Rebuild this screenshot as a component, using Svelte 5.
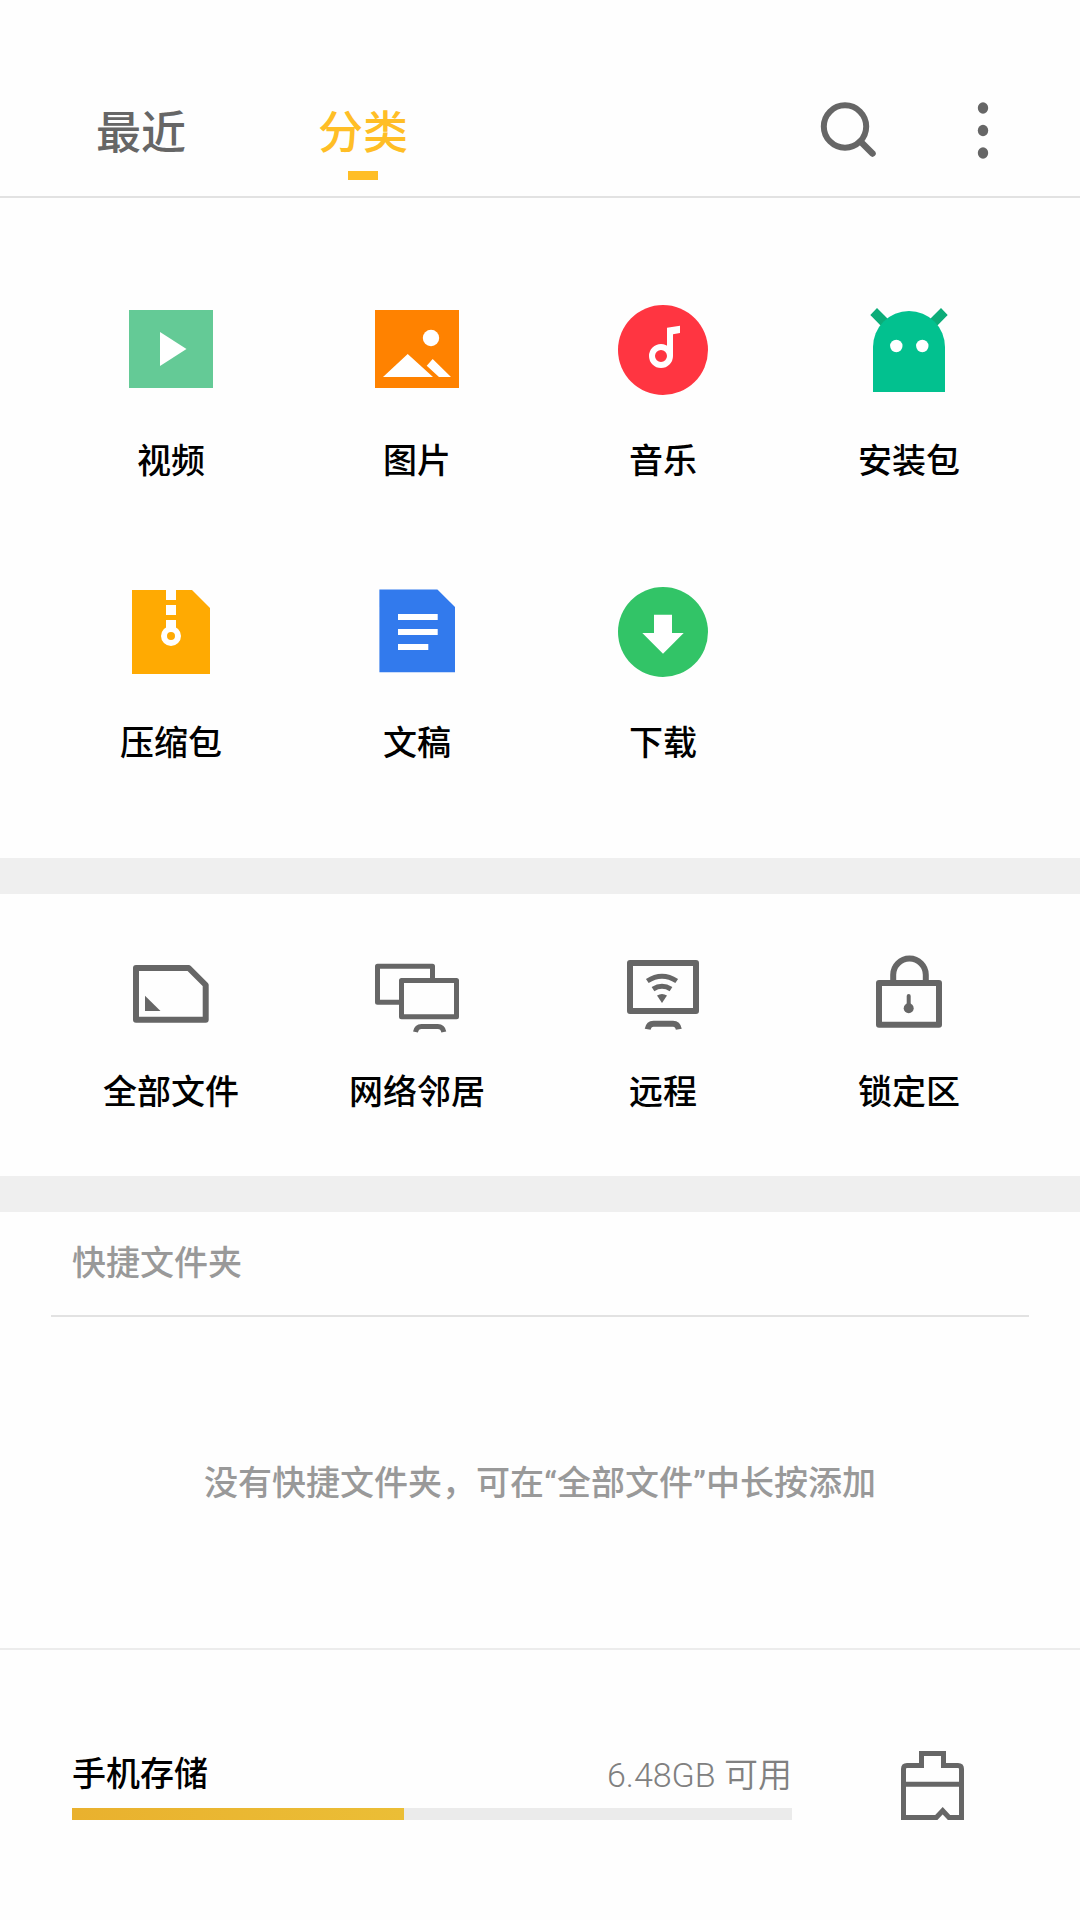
<script lang="ts">
  type Entry = {
    id: string;
    label: string;
  };

  const tabs: Entry[] = [
    { id: "recent", label: "最近" },
    { id: "category", label: "分类" },
  ];

  const categories: Entry[] = [
    { id: "video", label: "视频" },
    { id: "image", label: "图片" },
    { id: "music", label: "音乐" },
    { id: "apk", label: "安装包" },
    { id: "zip", label: "压缩包" },
    { id: "doc", label: "文稿" },
    { id: "download", label: "下载" },
  ];

  const places: Entry[] = [
    { id: "files", label: "全部文件" },
    { id: "network", label: "网络邻居" },
    { id: "remote", label: "远程" },
    { id: "lock", label: "锁定区" },
  ];

  const usedPercent = 46.1;

  let activeTab = $state("category");
</script>

{#snippet icon(id: string)}
  <svg class="icon" viewBox="0 0 90 90" aria-hidden="true">
    {#if id === "video"}
      <path fill="#64ca96" d="M3 5h84v78H3z" />
      <path fill="#fff" d="M34 27v34l26.5-17z" />
    {:else if id === "image"}
      <path fill="#ff8200" d="M3 5h84v78H3z" />
      <circle cx="59" cy="33" r="8.2" fill="#fff" />
      <path fill="#fff" d="M11 72l24.7-23L61 72zM54.7 60.7l6-6.7L79 72H67z" />
    {:else if id === "music"}
      <circle cx="45" cy="45" r="45" fill="#ff3541" />
      <circle cx="43" cy="51" r="9" fill="none" stroke="#fff" stroke-width="6" />
      <path fill="#fff" d="M49 22.7l13-2V28l-7 1.3V51h-6z" />
    {:else if id === "apk"}
      <path fill="#0cac78" d="M6.3 10L13 3l13 13-7 7zM83.7 10L77 3 64 16l7 7z" />
      <path fill="#02c18f" d="M9 87V42a36 36 0 0 1 72 0v45z" />
      <circle cx="32.3" cy="41" r="6.2" fill="#fff" />
      <circle cx="58.3" cy="41" r="6.2" fill="#fff" />
    {:else if id === "zip"}
      <path fill="#ffaa02" d="M6 3h60l18 18v66H6z" />
      <path fill="#fff" d="M40 3h10v10H40zM40 18h10v10H40zM40 33h10v10H40z" />
      <circle cx="45" cy="49" r="7" fill="none" stroke="#fff" stroke-width="6" />
    {:else if id === "doc"}
      <path fill="#327aed" d="M7.4 2.4h58L83 20v65.3H7.4z" />
      <path fill="#fff" d="M26 27h39.7v6H26zM26 42h39.7v6H26zM26 57h30.3v6H26z" />
    {:else if id === "download"}
      <circle cx="45" cy="45" r="45" fill="#32c467" />
      <path fill="#fff" d="M36 27.7h18V46h11.7L45 66.7 24.3 46H36z" />
    {:else if id === "files"}
      <path class="line" d="M10 18h52.7l17 17v34.7H10z" />
      <path fill="#666" d="M19 45.7V61h15.5z" />
    {:else if id === "network"}
      <path
        class="line line--thin"
        d="M27 52.2H5.5v-36h55V28M29.5 30.5h55v36.3h-55zM43.5 82c.7-3.8 2.6-5.5 6-5.5h16.3c3.4 0 5.3 1.7 6 5.5"
      />
    {:else if id === "remote"}
      <path class="line" d="M12 13h66v48H12z" />
      <path class="line" d="M29.7 79.3c.7-3.9 2.6-5.6 5.8-5.6H55c3.2 0 5.1 1.7 5.8 5.6" />
      <path class="line line--thin" d="M29.3 31q14.7-9.5 29.4 0M35 39.2q9-5.8 18 0" />
      <path fill="#666" d="M39 45.5q5-3 10 0l-5 7.4z" />
    {:else if id === "lock"}
      <path class="line" d="M15 33h60v41.7H15z" />
      <path class="line" d="M29.2 33v-8.2a16.3 16.3 0 0 1 32.6 0V33" />
      <circle cx="44.7" cy="58.3" r="5" fill="#666" />
      <path stroke="#666" stroke-width="4" stroke-linecap="round" d="M44.7 46v10" />
    {/if}
  </svg>
{/snippet}

<main class="page">
  <header class="header">
    <nav class="tabs">
      {#each tabs as tab (tab.id)}
        <button
          type="button"
          class="tab"
          class:tab--active={tab.id === activeTab}
          onclick={() => (activeTab = tab.id)}
        >
          {tab.label}
        </button>
      {/each}
    </nav>

    <button type="button" class="header__action" aria-label="搜索">
      <svg viewBox="0 0 60 60" width="60" height="60">
        <circle cx="26" cy="26.5" r="21.2" fill="none" stroke="#666" stroke-width="6" />
        <path stroke="#666" stroke-width="6.5" stroke-linecap="round" d="M41.5 41.5l12 12" />
      </svg>
    </button>
    <button type="button" class="header__action" aria-label="更多">
      <svg viewBox="0 0 20 60" width="20" height="60" fill="#666">
        <ellipse cx="10" cy="8" rx="5.2" ry="5.7" />
        <ellipse cx="10" cy="30.5" rx="5.2" ry="5.7" />
        <ellipse cx="10" cy="53" rx="5.2" ry="5.7" />
      </svg>
    </button>
  </header>

  <section class="grid">
    {#each categories as entry (entry.id)}
      <button type="button" class="item">
        {@render icon(entry.id)}
        <span>{entry.label}</span>
      </button>
    {/each}
  </section>

  <section class="grid grid--places">
    {#each places as entry (entry.id)}
      <button type="button" class="item">
        {@render icon(entry.id)}
        <span>{entry.label}</span>
      </button>
    {/each}
  </section>

  <section class="shortcuts">
    <h2 class="shortcuts__title">快捷文件夹</h2>
    <p class="shortcuts__empty">没有快捷文件夹，可在“全部文件”中长按添加</p>
  </section>

  <footer class="storage">
    <div class="storage__info">
      <div class="storage__row">
        <span>手机存储</span>
        <span class="storage__free">6.48GB 可用</span>
      </div>
      <div class="storage__bar">
        <div class="storage__used" style:width={`${usedPercent}%`}></div>
      </div>
    </div>
    <button type="button" class="storage__clean" aria-label="清理">
      <svg viewBox="0 0 64 70" width="64" height="70" fill="none" stroke="#666" stroke-width="5">
        <path
          d="M2.5 67.5V19q0-3.5 3.5-3.5h14.5v-12h22v12H57q3.5 0 3.5 3.5v48.5H48l-6.3-6.8-6.4 6.8zM2.5 34.3h58"
        />
      </svg>
    </button>
  </footer>
</main>

<style>
  :global(body) {
    background: #fefefe;
  }

  .page {
    width: 1080px;
    height: 1920px;
    box-sizing: border-box;
    display: flex;
    flex-direction: column;
    overflow: hidden;
    background: #fefefe;
    color: #000;
    font-family: Roboto, "Noto Sans CJK SC", sans-serif;
    font-size: 34px;
    font-weight: 500;
    line-height: 40px;
  }

  button {
    margin: 0;
    border: none;
    padding: 0;
    background: none;
    color: inherit;
    font: inherit;
    cursor: pointer;
  }

  svg {
    display: block;
  }

  .header {
    height: 198px;
    box-sizing: border-box;
    border-bottom: 2px solid #e2e2e2;
    padding: 84px 87px 0 96px;
    display: flex;
    align-items: flex-start;
  }

  .tabs {
    margin-right: auto;
    display: flex;
    gap: 132px;
  }

  .tab {
    width: 90px;
    height: 96px;
    padding-top: 18px;
    display: flex;
    flex-direction: column;
    align-items: center;
    box-sizing: border-box;
    color: #666;
    font-size: 45px;
    line-height: 64px;
    white-space: nowrap;
  }

  .tab--active {
    color: #ffbe26;
  }

  .tab--active::after {
    content: "";
    width: 30px;
    height: 9px;
    margin-top: 5px;
    background: #ffbe26;
  }

  .header__action {
    margin-top: 16px;
  }

  .header__action + .header__action {
    margin-left: 94px;
  }

  .grid {
    height: 696px;
    box-sizing: border-box;
    border-bottom: 36px solid #efefef;
    padding: 107px 48px 0;
    display: grid;
    grid-template-columns: repeat(4, 246px);
    grid-auto-rows: 282px;
    --label-gap: 46px;
  }

  .grid--places {
    height: 318px;
    padding-top: 56px;
    --label-gap: 32px;
  }

  .item {
    display: flex;
    flex-direction: column;
    align-items: center;
    gap: var(--label-gap);
  }

  .icon {
    width: 90px;
    height: 90px;
  }

  .line {
    fill: none;
    stroke: #666;
    stroke-width: 6;
    stroke-linejoin: round;
  }

  .line--thin {
    stroke-width: 5;
  }

  .shortcuts {
    height: 438px;
    box-sizing: border-box;
    border-bottom: 2px solid #ececec;
    padding: 0 51px;
    color: #999;
  }

  .shortcuts__title {
    height: 105px;
    margin: 0;
    box-sizing: border-box;
    border-bottom: 2px solid #e2e2e2;
    padding: 31px 21px 0;
    font-size: inherit;
    font-weight: inherit;
  }

  .shortcuts__empty {
    margin: 146px 0 0;
    text-align: center;
  }

  .storage {
    padding: 100px 115px 0 72px;
    display: flex;
    justify-content: space-between;
  }

  .storage__info {
    width: 720px;
    padding-top: 4px;
  }

  .storage__row {
    height: 54px;
    display: flex;
    justify-content: space-between;
  }

  .storage__free {
    padding-top: 1px;
    color: #808080;
    font-weight: 350;
  }

  .storage__bar {
    height: 12px;
    background: #ebebeb;
  }

  .storage__used {
    height: 100%;
    background: linear-gradient(to right, #e9b12e, #ebbe36);
  }

  .storage__clean {
    align-self: flex-start;
  }
</style>
